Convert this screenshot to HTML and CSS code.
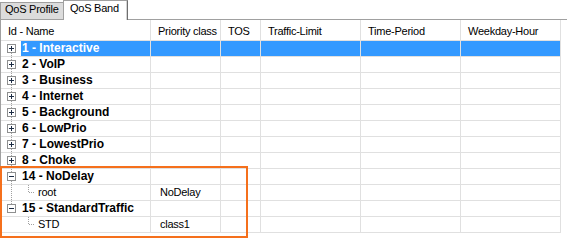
FILE: index.html
```html
<!DOCTYPE html>
<html lang="en">
<head>
    <meta charset="UTF-8">
    <title>QoS Band</title>
    <link rel="stylesheet" href="styles.css">
</head>
<body>
    <div class="tabstrip">
        <div class="tab">QoS Profile</div>
        <div class="tab active">QoS Band</div>
    </div>

    <div class="grid">
        <div class="row head">
            <div class="cell">Id - Name</div>
            <div class="cell">Priority class</div>
            <div class="cell">TOS</div>
            <div class="cell">Traffic-Limit</div>
            <div class="cell">Time-Period</div>
            <div class="cell">Weekday-Hour</div>
        </div>

        <div class="row selected">
            <div class="cell tree">
                <svg class="glyph" width="20" height="15"><line class="dots" x1="10.5" y1="12" x2="10.5" y2="15"/><rect class="box" x="6.5" y="3.5" width="8" height="8"/><path class="sign" d="M8 7.5h5M10.5 5v5"/></svg>
                <span class="label">1 - Interactive</span>
            </div>
            <div class="cell"></div><div class="cell"></div><div class="cell"></div><div class="cell"></div><div class="cell"></div>
        </div>
        <div class="row">
            <div class="cell tree">
                <svg class="glyph" width="20" height="15"><line class="dots" x1="10.5" y1="0" x2="10.5" y2="15"/><rect class="box" x="6.5" y="3.5" width="8" height="8"/><path class="sign" d="M8 7.5h5M10.5 5v5"/></svg>
                <span class="label">2 - VoIP</span>
            </div>
            <div class="cell"></div><div class="cell"></div><div class="cell"></div><div class="cell"></div><div class="cell"></div>
        </div>
        <div class="row">
            <div class="cell tree">
                <svg class="glyph" width="20" height="15"><line class="dots" x1="10.5" y1="0" x2="10.5" y2="15"/><rect class="box" x="6.5" y="3.5" width="8" height="8"/><path class="sign" d="M8 7.5h5M10.5 5v5"/></svg>
                <span class="label">3 - Business</span>
            </div>
            <div class="cell"></div><div class="cell"></div><div class="cell"></div><div class="cell"></div><div class="cell"></div>
        </div>
        <div class="row">
            <div class="cell tree">
                <svg class="glyph" width="20" height="15"><line class="dots" x1="10.5" y1="0" x2="10.5" y2="15"/><rect class="box" x="6.5" y="3.5" width="8" height="8"/><path class="sign" d="M8 7.5h5M10.5 5v5"/></svg>
                <span class="label">4 - Internet</span>
            </div>
            <div class="cell"></div><div class="cell"></div><div class="cell"></div><div class="cell"></div><div class="cell"></div>
        </div>
        <div class="row">
            <div class="cell tree">
                <svg class="glyph" width="20" height="15"><line class="dots" x1="10.5" y1="0" x2="10.5" y2="15"/><rect class="box" x="6.5" y="3.5" width="8" height="8"/><path class="sign" d="M8 7.5h5M10.5 5v5"/></svg>
                <span class="label">5 - Background</span>
            </div>
            <div class="cell"></div><div class="cell"></div><div class="cell"></div><div class="cell"></div><div class="cell"></div>
        </div>
        <div class="row">
            <div class="cell tree">
                <svg class="glyph" width="20" height="15"><line class="dots" x1="10.5" y1="0" x2="10.5" y2="15"/><rect class="box" x="6.5" y="3.5" width="8" height="8"/><path class="sign" d="M8 7.5h5M10.5 5v5"/></svg>
                <span class="label">6 - LowPrio</span>
            </div>
            <div class="cell"></div><div class="cell"></div><div class="cell"></div><div class="cell"></div><div class="cell"></div>
        </div>
        <div class="row">
            <div class="cell tree">
                <svg class="glyph" width="20" height="15"><line class="dots" x1="10.5" y1="0" x2="10.5" y2="15"/><rect class="box" x="6.5" y="3.5" width="8" height="8"/><path class="sign" d="M8 7.5h5M10.5 5v5"/></svg>
                <span class="label">7 - LowestPrio</span>
            </div>
            <div class="cell"></div><div class="cell"></div><div class="cell"></div><div class="cell"></div><div class="cell"></div>
        </div>
        <div class="row">
            <div class="cell tree">
                <svg class="glyph" width="20" height="15"><line class="dots" x1="10.5" y1="0" x2="10.5" y2="15"/><rect class="box" x="6.5" y="3.5" width="8" height="8"/><path class="sign" d="M8 7.5h5M10.5 5v5"/></svg>
                <span class="label">8 - Choke</span>
            </div>
            <div class="cell"></div><div class="cell"></div><div class="cell"></div><div class="cell"></div><div class="cell"></div>
        </div>
        <div class="row">
            <div class="cell tree">
                <svg class="glyph" width="20" height="15"><line class="dots" x1="10.5" y1="0" x2="10.5" y2="15"/><rect class="box" x="6.5" y="3.5" width="8" height="8"/><path class="sign" d="M8 7.5h5"/></svg>
                <span class="label">14 - NoDelay</span>
            </div>
            <div class="cell"></div><div class="cell"></div><div class="cell"></div><div class="cell"></div><div class="cell"></div>
        </div>
        <div class="row">
            <div class="cell tree">
                <svg class="glyph" width="36" height="15"><line class="dots" x1="10.5" y1="0" x2="10.5" y2="15"/><path class="dots" d="M27.5 0v8M28 7.5h6"/></svg>
                <span class="label child">root</span>
            </div>
            <div class="cell">NoDelay</div><div class="cell"></div><div class="cell"></div><div class="cell"></div><div class="cell"></div>
        </div>
        <div class="row">
            <div class="cell tree">
                <svg class="glyph" width="20" height="15"><line class="dots" x1="10.5" y1="0" x2="10.5" y2="4"/><rect class="box" x="6.5" y="3.5" width="8" height="8"/><path class="sign" d="M8 7.5h5"/></svg>
                <span class="label">15 - StandardTraffic</span>
            </div>
            <div class="cell"></div><div class="cell"></div><div class="cell"></div><div class="cell"></div><div class="cell"></div>
        </div>
        <div class="row">
            <div class="cell tree">
                <svg class="glyph" width="36" height="15"><path class="dots" d="M27.5 0v8M28 7.5h6"/></svg>
                <span class="label child">STD</span>
            </div>
            <div class="cell">class1</div><div class="cell"></div><div class="cell"></div><div class="cell"></div><div class="cell"></div>
        </div>
    </div>

    <!-- orange highlight over the two custom bands -->
    <div class="mark"></div>
</body>
</html>
```

FILE: styles.css
```css
body {
    margin: 0;
    width: 567px;
    height: 242px;
    overflow: hidden;
    position: relative;
    background: #fff;
    color: #000;
    font-family: "Liberation Sans", Arial, sans-serif;
    font-size: 11px;
    letter-spacing: -0.25px;
}
.tabstrip {
    display: flex;
    align-items: flex-start;
    height: 20px;
    box-shadow: inset 0 -1px #a0a0a0;
}
.tab {
    box-sizing: border-box;
    width: 63px;
    height: 17px;
    margin-top: 2px;
    padding-left: 4px;
    line-height: 13px;
    background: #dcdcdc;
    border: 1px solid #a0a0a0;
    border-bottom: none;
    border-right: none;
}
.tab.active {
    width: 65px;
    height: 20px;
    margin-top: 0;
    padding: 1px 0 0 6px;
    background: #fff;
    border-right: 1px solid #6e6e6e;
    box-shadow: inset -1px 0 #d4d4d4;
}
.grid {
    width: max-content;
    border-left: 1px solid #a0a0a0;
}
.row {
    display: grid;
    grid-template-columns: 150px 70px 40px 100px 100px 100px;
}
.cell {
    box-sizing: border-box;
    height: 16px;
    padding-left: 9px;
    line-height: 15px;
    white-space: nowrap;
    border-right: 1px solid #e0e0e0;
    border-bottom: 1px solid #e0e0e0;
}
.head .cell {
    height: 21px;
    padding: 3px 0 0 7px;
    line-height: 17px;
}
.tree {
    display: flex;
    padding-left: 0;
}
.glyph {
    display: block;
    flex: none;
}
.dots {
    stroke: #a0a0a0;
    stroke-dasharray: 1 1;
    fill: none;
}
.box {
    fill: #fff;
    stroke: #8e8f8f;
}
.sign {
    stroke: #1c2c44;
    fill: none;
}
.label {
    flex: 1;
    padding-left: 1px;
    font-size: 12px;
    font-weight: bold;
    letter-spacing: 0;
}
.label.child {
    font-size: 11px;
    font-weight: normal;
    letter-spacing: -0.25px;
}
.selected .cell {
    background: #3399ff;
}
.selected .tree {
    background: #fff;
}
.selected .label {
    background: #3399ff;
    color: #fff;
}
.mark {
    position: absolute;
    left: 0;
    top: 166px;
    width: 248px;
    height: 72px;
    box-sizing: border-box;
    border: 2px solid #f5701c;
}
```
